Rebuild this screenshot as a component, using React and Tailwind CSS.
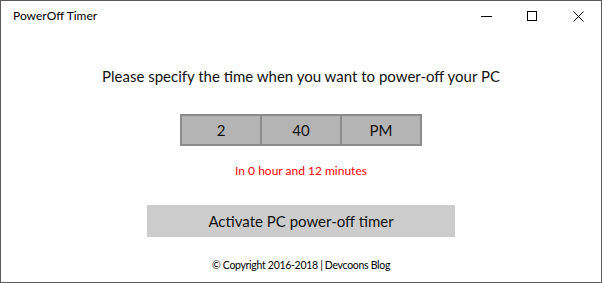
import React from 'react';

const FONT = { fontFamily: '"Segoe UI", Lato, "Open Sans", sans-serif' };

function TitleBar() {
  return (
    <div className="flex h-[30px] items-center justify-between">
      <span className="pl-[12px] text-[12px] text-black">PowerOff Timer</span>
      <div className="flex h-full">
        {/* minimize */}
        <div className="flex w-[46px] items-center justify-center">
          <svg width="11" height="11" viewBox="0 0 11 11">
            <path d="M0 5.5h11" stroke="#000" strokeWidth="1" />
          </svg>
        </div>
        {/* maximize */}
        <div className="flex w-[46px] items-center justify-center">
          <svg width="10" height="10" viewBox="0 0 10 10">
            <rect x="0.5" y="0.5" width="9" height="9" fill="none" stroke="#000" strokeWidth="1" />
          </svg>
        </div>
        {/* close */}
        <div className="flex w-[46px] items-center justify-center">
          <svg width="11" height="11" viewBox="0 0 11 11">
            <path d="M0.5 0.5l10 10M10.5 0.5l-10 10" stroke="#000" strokeWidth="1" />
          </svg>
        </div>
      </div>
    </div>
  );
}

export default function App() {
  const parts = ['2', '40', 'PM'];

  return (
    <div className="h-[283px] w-[602px] overflow-hidden bg-white" style={FONT}>
      <div className="flex h-full flex-col border border-[#5a5a5a]">
        <TitleBar />

        <div className="flex flex-col items-center">
          <p className="mt-[35px] text-[15px] leading-[20px] text-[#111]">
            Please specify the time when you want to power-off your PC
          </p>

          {/* time picker */}
          <div className="mt-[28px] flex h-[32px] w-[242px] border-2 border-[#8c8c8c] bg-[#b4b4b4]">
            {parts.map((p, i) => (
              <div
                key={p}
                className={`flex flex-1 items-center justify-center text-[15px] text-[#111] ${i > 0 ? 'border-l-2 border-[#8c8c8c]' : ''}`}
              >
                {p}
              </div>
            ))}
          </div>

          <p className="mt-[17px] text-[12px] leading-[16px] text-[#ff0000]">
            In 0 hour and 12 minutes
          </p>

          <button className="mt-[26px] flex h-[32px] w-[308px] items-center justify-center bg-[#cccccc] text-[15px] text-[#111]">
            Activate PC power-off timer
          </button>

          <p className="mt-[21px] text-[10.5px] leading-[14px] tracking-[-0.3px] text-black">
            © Copyright 2016-2018 | Devcoons Blog
          </p>
        </div>
      </div>
    </div>
  );
}
